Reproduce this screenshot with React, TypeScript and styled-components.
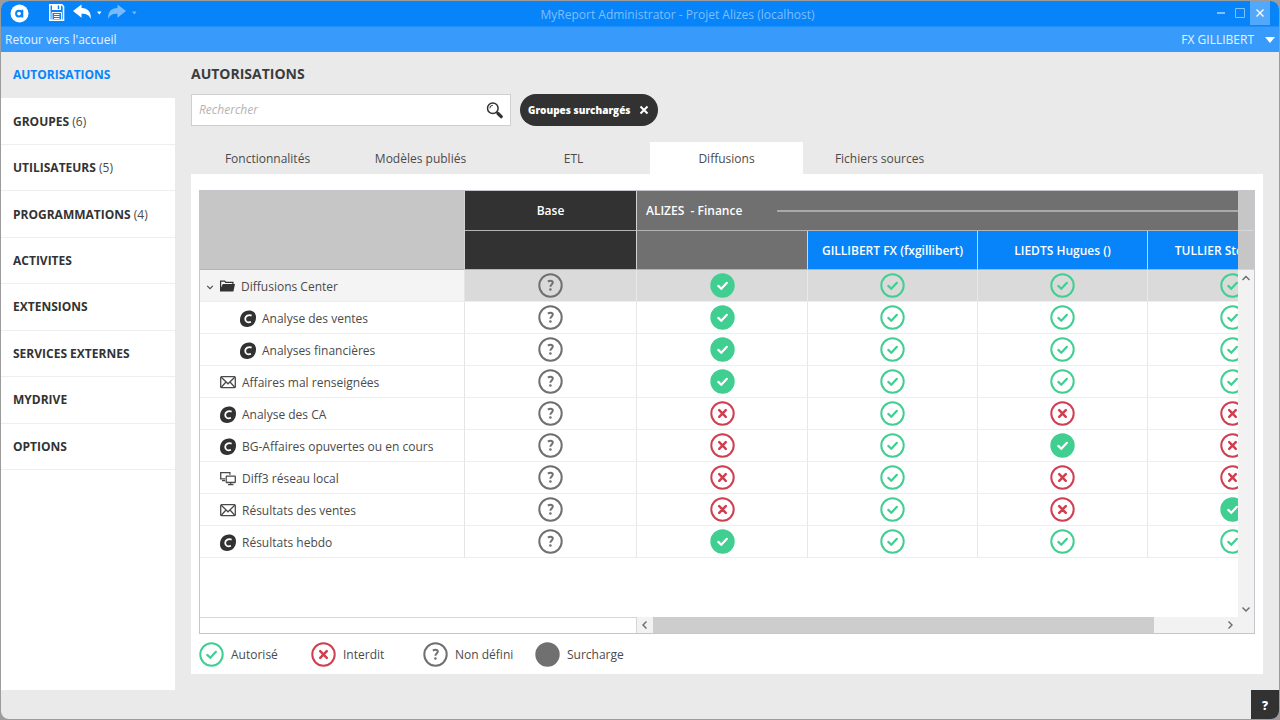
import React from "react";
import styled, { createGlobalStyle, css } from "styled-components";

const GlobalStyle = createGlobalStyle`
  *, *::before, *::after { box-sizing: border-box; }
  body {
    margin: 0;
    background: #9c9c9c;
    color: #4a4a4a;
    font: 12px/16px "Open Sans", "Noto Sans", sans-serif;
  }
  button, input { font: inherit; color: inherit; }
  button { border: 0; padding: 0; background: none; cursor: pointer; }
  ul { margin: 0; padding: 0; list-style: none; }
  a { color: inherit; text-decoration: none; }
  svg { display: block; flex: none; }
`;

const Backdrop = styled.div`
  display: flex;
  min-height: 100vh;
  padding: 1px;
`;

const Window = styled.div`
  flex: 1;
  min-width: 0;
  display: flex;
  flex-direction: column;
  border-radius: 8px;
  overflow: hidden;
  background: #eaeaea;
`;

const TitleBar = styled.header`
  display: flex;
  height: 26px;
  background: #0884fa;
  border-bottom: 1px solid #1f8ffa;
`;

const QuickTools = styled.div`
  display: flex;
  align-items: center;
  width: 144px;
  padding-left: 9px;
`;

const ToolButton = styled.button<{ $dim?: boolean }>`
  color: #ffffff;
  opacity: ${(p) => (p.$dim ? 0.45 : 1)};
`;

const Logo = styled.span`
  width: 39px;
`;

const Title = styled.div`
  flex: 1;
  text-align: center;
  line-height: 28px;
  color: #7fbffc;
`;

const WindowControls = styled.div`
  display: flex;
  width: 69px;
  color: #84c1fc;
`;

const WindowButton = styled.button<{ $active?: boolean }>`
  display: grid;
  place-items: center;
  width: 20px;
  height: 24px;
  ${(p) => p.$active && css`
    background: #52a8fb;
    color: #ffffff;
  `}
`;

const NavBar = styled.div`
  display: flex;
  justify-content: space-between;
  align-items: center;
  height: 25px;
  padding: 0 4px;
  background: #389bfb;
  color: #e6f3ff;
`;

const UserButton = styled.button`
  display: flex;
  align-items: center;
  gap: 11px;
`;

const Body = styled.div`
  flex: 1;
  display: flex;
  min-height: 0;
`;

const Sidebar = styled.nav`
  width: 174px;
  flex: none;
  background: #ffffff;
`;

const Menu = styled.ul`
  display: grid;
  grid-auto-rows: 1fr;
  height: 418px;
`;

const MenuItem = styled.li<{ $current?: boolean }>`
  display: flex;
  align-items: center;
  padding: 1px 0 0 12px;
  border-bottom: 1px solid ${(p) => (p.$current ? "#eaeaea" : "#eeeeee")};
  background: ${(p) => (p.$current ? "#eaeaea" : "transparent")};
`;

const MenuLabel = styled.b<{ $current?: boolean }>`
  color: ${(p) => (p.$current ? "#0884fa" : "#333333")};
`;

const Main = styled.main`
  flex: 1;
  min-width: 0;
  display: flex;
  flex-direction: column;
  padding: 12px 16px 16px;
`;

const Heading = styled.h1`
  margin: 0;
  font-size: 14px;
  line-height: 20px;
  font-weight: 700;
  color: #3c3c3c;
`;

const Filters = styled.div`
  display: flex;
  gap: 9px;
  margin-top: 10px;
`;

const SearchBox = styled.form`
  display: flex;
  align-items: center;
  width: 320px;
  height: 32px;
  padding: 0 7px;
  background: #ffffff;
  border: 1px solid #cfcfcf;
`;

const SearchInput = styled.input`
  flex: 1;
  min-width: 0;
  padding: 0;
  border: 0;
  outline: 0;
  background: none;
  &::placeholder {
    color: #b4b4b4;
    font-style: italic;
    opacity: 1;
  }
`;

const Chip = styled.button`
  display: flex;
  align-items: center;
  justify-content: space-between;
  width: 138px;
  height: 32px;
  padding: 0 9px 0 8px;
  border-radius: 16px;
  background: #323232;
  color: #ffffff;
  font-size: 10px;
  font-weight: 800;
`;

const Tabs = styled.div`
  display: flex;
  margin-top: 16px;
`;

const Tab = styled.button<{ $selected?: boolean }>`
  width: 153px;
  height: 32px;
  padding-top: 1px;
  background: ${(p) => (p.$selected ? "#ffffff" : "transparent")};
`;

const Panel = styled.section`
  flex: 1;
  display: flex;
  flex-direction: column;
  padding: 16px 8px 7px;
  background: #ffffff;
`;

const GridFrame = styled.div`
  flex: 1;
  display: grid;
  grid-template-columns: minmax(0, 1fr) 16px;
  grid-template-rows: minmax(0, 1fr) 16px;
  border: 1px solid #c3c6ca;
`;

const GridViewport = styled.div`
  overflow: hidden;
`;

const Table = styled.table`
  table-layout: fixed;
  width: 1118px;
  border-collapse: separate;
  border-spacing: 0;
`;

const headTone = {
  blank: "#c6c6c6",
  base: "#323232",
  group: "#707070",
  user: "#0884fa",
};

const HeadCell = styled.th<{ $tone: keyof typeof headTone; $left?: boolean }>`
  height: 40px;
  padding: ${(p) => (p.$left ? "0 0 0 9px" : "0")};
  background: ${(p) => headTone[p.$tone]};
  border-right: 1px solid #d2d2d2;
  border-bottom: 1px solid #b4b4b4;
  color: #ffffff;
  font-weight: 600;
  white-space: nowrap;
  tr + tr > & {
    height: 39px;
    padding-top: 2px;
  }
`;

const GroupTitle = styled.div`
  display: flex;
  align-items: center;
  white-space: pre;
  gap: 35px;
  &::after {
    content: "";
    flex: 1;
    height: 2px;
    background: #a9a9a9;
  }
`;

const BodyRow = styled.tr<{ $active?: boolean }>`
  th { background: ${(p) => (p.$active ? "#f4f4f4" : "#ffffff")}; }
  td { background: ${(p) => (p.$active ? "#dadada" : "#ffffff")}; }
`;

const NameCell = styled.th`
  height: 32px;
  padding: 0;
  border-right: 1px solid #e4e4e4;
  border-bottom: 1px solid #eeeeee;
  font-weight: 400;
  text-align: left;
`;

const NameContent = styled.div<{ $level: number }>`
  display: flex;
  align-items: center;
  gap: 6px;
  padding-top: 2px;
  padding-left: ${(p) => [6, 20, 40][p.$level]}px;
`;

const StatusCell = styled.td`
  height: 32px;
  padding: 0;
  border-right: 1px solid #e8e8e8;
  border-bottom: 1px solid #eeeeee;
`;

const StatusButton = styled.button`
  display: block;
  margin: 0 auto;
`;

const VerticalSide = styled.div`
  display: flex;
  flex-direction: column;
  background: #f2f2f2;
`;

const SideHead = styled.div<{ $height: number }>`
  height: ${(p) => p.$height}px;
  background: #c6c6c6;
  border-bottom: 1px solid #d6d6d6;
`;

const VerticalTrack = styled.div`
  flex: 1;
  display: flex;
  flex-direction: column;
  justify-content: space-between;
`;

const ArrowButton = styled.button`
  display: grid;
  place-items: center;
  width: 16px;
  height: 16px;
  color: #6a6a6a;
`;

const BottomRow = styled.div`
  grid-column: 1 / -1;
  display: flex;
  background: #f2f2f2;
`;

const FrozenFoot = styled.div`
  width: 437px;
  background: #ffffff;
  border-top: 1px solid #d6d6d6;
  border-right: 1px solid #d6d6d6;
`;

const HorizontalTrack = styled.div`
  flex: 1;
  display: flex;
  padding-right: 16px;
`;

const ThumbLane = styled.div`
  flex: 1;
`;

const Thumb = styled.div`
  width: 88%;
  height: 16px;
  background: #cdcdcd;
`;

const Legend = styled.ul`
  display: flex;
  margin-top: 8px;
`;

const LegendItem = styled.li`
  display: flex;
  align-items: center;
  gap: 7px;
  width: 112px;
`;

const Footer = styled.footer`
  display: flex;
  justify-content: flex-end;
  height: 29px;
`;

const HelpButton = styled.button`
  width: 28px;
  padding-top: 2px;
  background: #323232;
  color: #ffffff;
  font-weight: 800;
`;

type Status = "ok" | "okFull" | "no" | "unset" | "override";

const statusLabel: Record<Status, string> = {
  ok: "Autorisé",
  okFull: "Autorisé (surcharge)",
  no: "Interdit",
  unset: "Non défini",
  override: "Surcharge",
};

function StatusIcon({ status }: { status: Status }) {
  const color = { ok: "#40cf91", okFull: "#40cf91", no: "#d03f50", unset: "#707070", override: "#707070" }[status];
  const full = status === "okFull" || status === "override";
  return (
    <svg width="25" height="25" viewBox="0 0 25 25" fill="none" aria-hidden="true">
      <circle cx="12.5" cy="12.5" r="11.2" stroke={color} strokeWidth="2" fill={full ? color : "none"} />
      {(status === "ok" || status === "okFull") && (
        <path d="M8.3 12.9l3 2.9 5.6-6" stroke={full ? "#ffffff" : color} strokeWidth="2.2" strokeLinecap="round" />
      )}
      {status === "no" && <path d="M9.200 9.200l6.600 6.600M15.800 9.200l-6.600 6.600" stroke={color} strokeWidth="2.5" strokeLinecap="round" />}
      {status === "unset" && (
        <>
          <path d="M9.900 8.600c.8-.6 1.600-.9 2.500-.9 1.500 0 2.400.7 2.400 1.900 0 1.900-2.400 1.900-2.400 4.100" stroke={color} strokeWidth="2" />
          <circle cx="12.400" cy="16.500" r="1.300" fill={color} />
        </>
      )}
    </svg>
  );
}

type Kind = "folder" | "center" | "mail" | "network";

function KindIcon({ kind }: { kind: Kind }) {
  if (kind === "folder")
    return (
      <svg width="15" height="16" viewBox="0 0 15 16" fill="#323232" aria-hidden="true">
        <path d="M0 12.500V1.500h5l1 1.200h7.500V5h-1.200V3.900H5.400L4.400 2.700H1.200V8.500L2.800 5h12.200L13.400 12.500z" />
      </svg>
    );
  if (kind === "center")
    return (
      <svg width="16" height="18" viewBox="0 0 16 18" aria-hidden="true">
        <path d="M9 .5c4.600 0 7.200 2.800 7 7.200-.2 5.500-3.800 9.200-9 9.200-4.500 0-7.200-2.700-7-7C.2 4.200 3.800.5 9 .5z" fill="#323232" />
        <path d="M11.600 5.600c-3-1.400-6.400.4-6.400 3.500 0 2.900 2.900 4 5.700 2.700" fill="none" stroke="#ffffff" strokeWidth="1.800" />
      </svg>
    );
  if (kind === "mail")
    return (
      <svg width="16" height="14" viewBox="0 0 16 14" fill="none" stroke="#4a4a4a" strokeWidth="1.300" aria-hidden="true">
        <rect x="0.700" y="0.700" width="14.600" height="11" rx="1" />
        <path d="M1 1l7 6.800L15 1M1 11.500l4.800-5.200M15 11.500l-4.800-5.200" />
      </svg>
    );
  return (
    <svg width="16" height="14" viewBox="0 0 16 14" fill="none" stroke="#4a4a4a" strokeWidth="1.300" aria-hidden="true">
      <path d="M5 6.800H.7V.7h9.200v2.100M2 8.700h3" />
      <rect x="6.200" y="4.200" width="9.100" height="6.300" rx="0.500" />
      <path d="M10.700 10.700v2M8 12.700h5.500" />
    </svg>
  );
}

function Chevron({ direction, size = 10 }: { direction: "up" | "down" | "left" | "right"; size?: number }) {
  const d = {
    up: "M1.500 7L5 3.500 8.500 7",
    down: "M1.500 3.500L5 7l3.500-3.500",
    left: "M6.500 1.500L3 5l3.500 3.500",
    right: "M3.500 1.500L7 5 3.500 8.500",
  }[direction];
  return (
    <svg width={size} height={size} viewBox="0 0 10 10" fill="none" stroke="currentColor" strokeWidth="1.400" aria-hidden="true">
      <path d={d} />
    </svg>
  );
}

const menu = [
  { label: "AUTORISATIONS", current: true },
  { label: "GROUPES", count: 6 },
  { label: "UTILISATEURS", count: 5 },
  { label: "PROGRAMMATIONS", count: 4 },
  { label: "ACTIVITES" },
  { label: "EXTENSIONS" },
  { label: "SERVICES EXTERNES" },
  { label: "MYDRIVE" },
  { label: "OPTIONS" },
];

const tabs = ["Fonctionnalités", "Modèles publiés", "ETL", "Diffusions", "Fichiers sources"];
const users = ["GILLIBERT FX (fxgillibert)", "LIEDTS Hugues ()", "TULLIER Stephane ()"];

const rows: { name: string; level: number; kind: Kind; cells: Status[] }[] = [
  { name: "Diffusions Center", level: 0, kind: "folder", cells: ["unset", "okFull", "ok", "ok", "ok"] },
  { name: "Analyse des ventes", level: 2, kind: "center", cells: ["unset", "okFull", "ok", "ok", "ok"] },
  { name: "Analyses financières", level: 2, kind: "center", cells: ["unset", "okFull", "ok", "ok", "ok"] },
  { name: "Affaires mal renseignées", level: 1, kind: "mail", cells: ["unset", "okFull", "ok", "ok", "ok"] },
  { name: "Analyse des CA", level: 1, kind: "center", cells: ["unset", "no", "ok", "no", "no"] },
  { name: "BG-Affaires opuvertes ou en cours", level: 1, kind: "center", cells: ["unset", "no", "ok", "okFull", "no"] },
  { name: "Diff3 réseau local", level: 1, kind: "network", cells: ["unset", "no", "ok", "no", "no"] },
  { name: "Résultats des ventes", level: 1, kind: "mail", cells: ["unset", "no", "ok", "no", "okFull"] },
  { name: "Résultats hebdo", level: 1, kind: "center", cells: ["unset", "okFull", "ok", "ok", "ok"] },
];

const legend: Status[] = ["ok", "no", "unset", "override"];

export default function App() {
  return (
    <>
      <GlobalStyle />
      <Backdrop>
        <Window>
          <TitleBar>
            <QuickTools>
              <Logo>
                <svg width="19" height="19" viewBox="0 0 19 19" aria-hidden="true">
                  <circle cx="9.500" cy="9.500" r="9" fill="#ffffff" />
                  <circle cx="9" cy="9.600" r="2.900" fill="none" stroke="#0884fa" strokeWidth="2" />
                  <path d="M12.300 5.800v7.800" stroke="#0884fa" strokeWidth="2" />
                </svg>
              </Logo>
              <ToolButton aria-label="Enregistrer">
                <svg width="16" height="24" viewBox="0 0 16 24" fill="none" stroke="currentColor" aria-hidden="true">
                  <path d="M.8 2.800h12l1.700 1.700v13.700H.8z" strokeWidth="1.600" />
                  <path d="M3 3h9v5H3z" fill="currentColor" stroke="none" />
                  <path d="M9.500 3.500v3.500" stroke="#0884fa" strokeWidth="1.500" />
                  <path d="M3 18v-7.500h9.500V18M5 12.500h5.500M5 14.500h5.500M5 16.500h5.500" />
                </svg>
              </ToolButton>
              <ToolButton aria-label="Annuler">
                <svg width="37" height="24" viewBox="0 0 37 24" fill="currentColor" aria-hidden="true">
                  <path d="M8 9l8.500-6.500V6c6.500 0 9.800 4 9.300 11-1.600-4-4.300-5.300-9.300-5.300v4z" />
                  <path d="M32 9.500h4.500l-2.200 3z" />
                </svg>
              </ToolButton>
              <ToolButton aria-label="Rétablir" $dim>
                <svg width="36" height="24" viewBox="0 0 36 24" fill="currentColor" aria-hidden="true">
                  <path d="M24 9l-8.500-6.500V6C9 6 5.700 10 6.200 17c1.600-4 4.300-5.300 9.300-5.300v4z" />
                  <path d="M30 9.500h4.500l-2.200 3z" />
                </svg>
              </ToolButton>
            </QuickTools>
            <Title>MyReport Administrator - Projet Alizes (localhost)</Title>
            <WindowControls>
              <WindowButton aria-label="Réduire">
                <svg width="10" height="10" viewBox="0 0 10 10" aria-hidden="true">
                  <path d="M2 5h8" stroke="currentColor" strokeWidth="2" />
                </svg>
              </WindowButton>
              <WindowButton aria-label="Agrandir">
                <svg width="10" height="10" viewBox="0 0 10 10" fill="none" aria-hidden="true">
                  <path d="M.5.5h9v9h-9z" stroke="currentColor" />
                </svg>
              </WindowButton>
              <WindowButton aria-label="Fermer" $active>
                <svg width="8" height="8" viewBox="0 0 8 8" aria-hidden="true">
                  <path d="M.5.5l7 7M7.500.5l-7 7" stroke="currentColor" strokeWidth="1.400" />
                </svg>
              </WindowButton>
            </WindowControls>
          </TitleBar>
          <NavBar>
            <a href="#accueil">Retour vers l'accueil</a>
            <UserButton>
              FX GILLIBERT
              <svg width="10" height="6" viewBox="0 0 10 6" fill="#ffffff" aria-hidden="true">
                <path d="M0 0h10L5 6z" />
              </svg>
            </UserButton>
          </NavBar>
          <Body>
            <Sidebar>
              <Menu>
                {menu.map((item) => (
                  <MenuItem key={item.label} $current={item.current}>
                    <a href="#menu">
                      <MenuLabel $current={item.current}>{item.label}</MenuLabel>
                      {item.count !== undefined && ` (${item.count})`}
                    </a>
                  </MenuItem>
                ))}
              </Menu>
            </Sidebar>
            <Main>
              <Heading>AUTORISATIONS</Heading>
              <Filters>
                <SearchBox>
                  <SearchInput type="search" placeholder="Rechercher" aria-label="Rechercher" />
                  <ToolButton type="button" aria-label="Lancer la recherche">
                    <svg width="17" height="17" viewBox="0 0 17 17" fill="none" stroke="#323232" aria-hidden="true">
                      <circle cx="6.800" cy="6.300" r="5.300" strokeWidth="1.500" />
                      <path d="M3.800 6.300a3 3 0 0 1 3-3" strokeWidth="1" />
                      <path d="M10.800 10.300l1.500 1.500" strokeWidth="1.500" />
                      <path d="M12 11.500l3.200 3.200" strokeWidth="3.200" strokeLinecap="round" />
                    </svg>
                  </ToolButton>
                </SearchBox>
                <Chip>
                  Groupes surchargés
                  <svg width="10" height="10" viewBox="0 0 10 10" aria-hidden="true">
                    <path d="M1.500 1.500l7 7M8.500 1.500l-7 7" stroke="#ffffff" strokeWidth="2" />
                  </svg>
                </Chip>
              </Filters>
              <Tabs role="tablist">
                {tabs.map((tab) => (
                  <Tab key={tab} role="tab" aria-selected={tab === "Diffusions"} $selected={tab === "Diffusions"}>
                    {tab}
                  </Tab>
                ))}
              </Tabs>
              <Panel>
                <GridFrame>
                  <GridViewport>
                    <Table>
                      <colgroup>
                        <col width="265" />
                        <col width="172" />
                        <col width="171" />
                        <col width="170" />
                        <col width="170" />
                        <col width="170" />
                      </colgroup>
                      <thead>
                        <tr>
                          <HeadCell $tone="blank" rowSpan={2} />
                          <HeadCell $tone="base">Base</HeadCell>
                          <HeadCell $tone="group" $left colSpan={4}>
                            <GroupTitle>{"ALIZES  - Finance"}</GroupTitle>
                          </HeadCell>
                        </tr>
                        <tr>
                          <HeadCell $tone="base" />
                          <HeadCell $tone="group" />
                          {users.map((user) => (
                            <HeadCell key={user} $tone="user">{user}</HeadCell>
                          ))}
                        </tr>
                      </thead>
                      <tbody>
                        {rows.map((row) => (
                          <BodyRow key={row.name} $active={row.level === 0}>
                            <NameCell scope="row">
                              <NameContent $level={row.level}>
                                {row.level === 0 && <Chevron direction="down" size={8} />}
                                <KindIcon kind={row.kind} />
                                {row.name}
                              </NameContent>
                            </NameCell>
                            {row.cells.map((status, i) => (
                              <StatusCell key={i}>
                                <StatusButton aria-label={statusLabel[status]}>
                                  <StatusIcon status={status} />
                                </StatusButton>
                              </StatusCell>
                            ))}
                          </BodyRow>
                        ))}
                      </tbody>
                    </Table>
                  </GridViewport>
                  <VerticalSide>
                    <SideHead $height={40} />
                    <SideHead $height={39} />
                    <VerticalTrack>
                      <ArrowButton aria-label="Défiler vers le haut"><Chevron direction="up" /></ArrowButton>
                      <ArrowButton aria-label="Défiler vers le bas"><Chevron direction="down" /></ArrowButton>
                    </VerticalTrack>
                  </VerticalSide>
                  <BottomRow>
                    <FrozenFoot />
                    <HorizontalTrack>
                      <ArrowButton aria-label="Défiler vers la gauche"><Chevron direction="left" /></ArrowButton>
                      <ThumbLane><Thumb /></ThumbLane>
                      <ArrowButton aria-label="Défiler vers la droite"><Chevron direction="right" /></ArrowButton>
                    </HorizontalTrack>
                  </BottomRow>
                </GridFrame>
                <Legend>
                  {legend.map((status) => (
                    <LegendItem key={status}>
                      <StatusIcon status={status} />
                      {statusLabel[status]}
                    </LegendItem>
                  ))}
                </Legend>
              </Panel>
            </Main>
          </Body>
          <Footer>
            <HelpButton aria-label="Aide">?</HelpButton>
          </Footer>
        </Window>
      </Backdrop>
    </>
  );
}
